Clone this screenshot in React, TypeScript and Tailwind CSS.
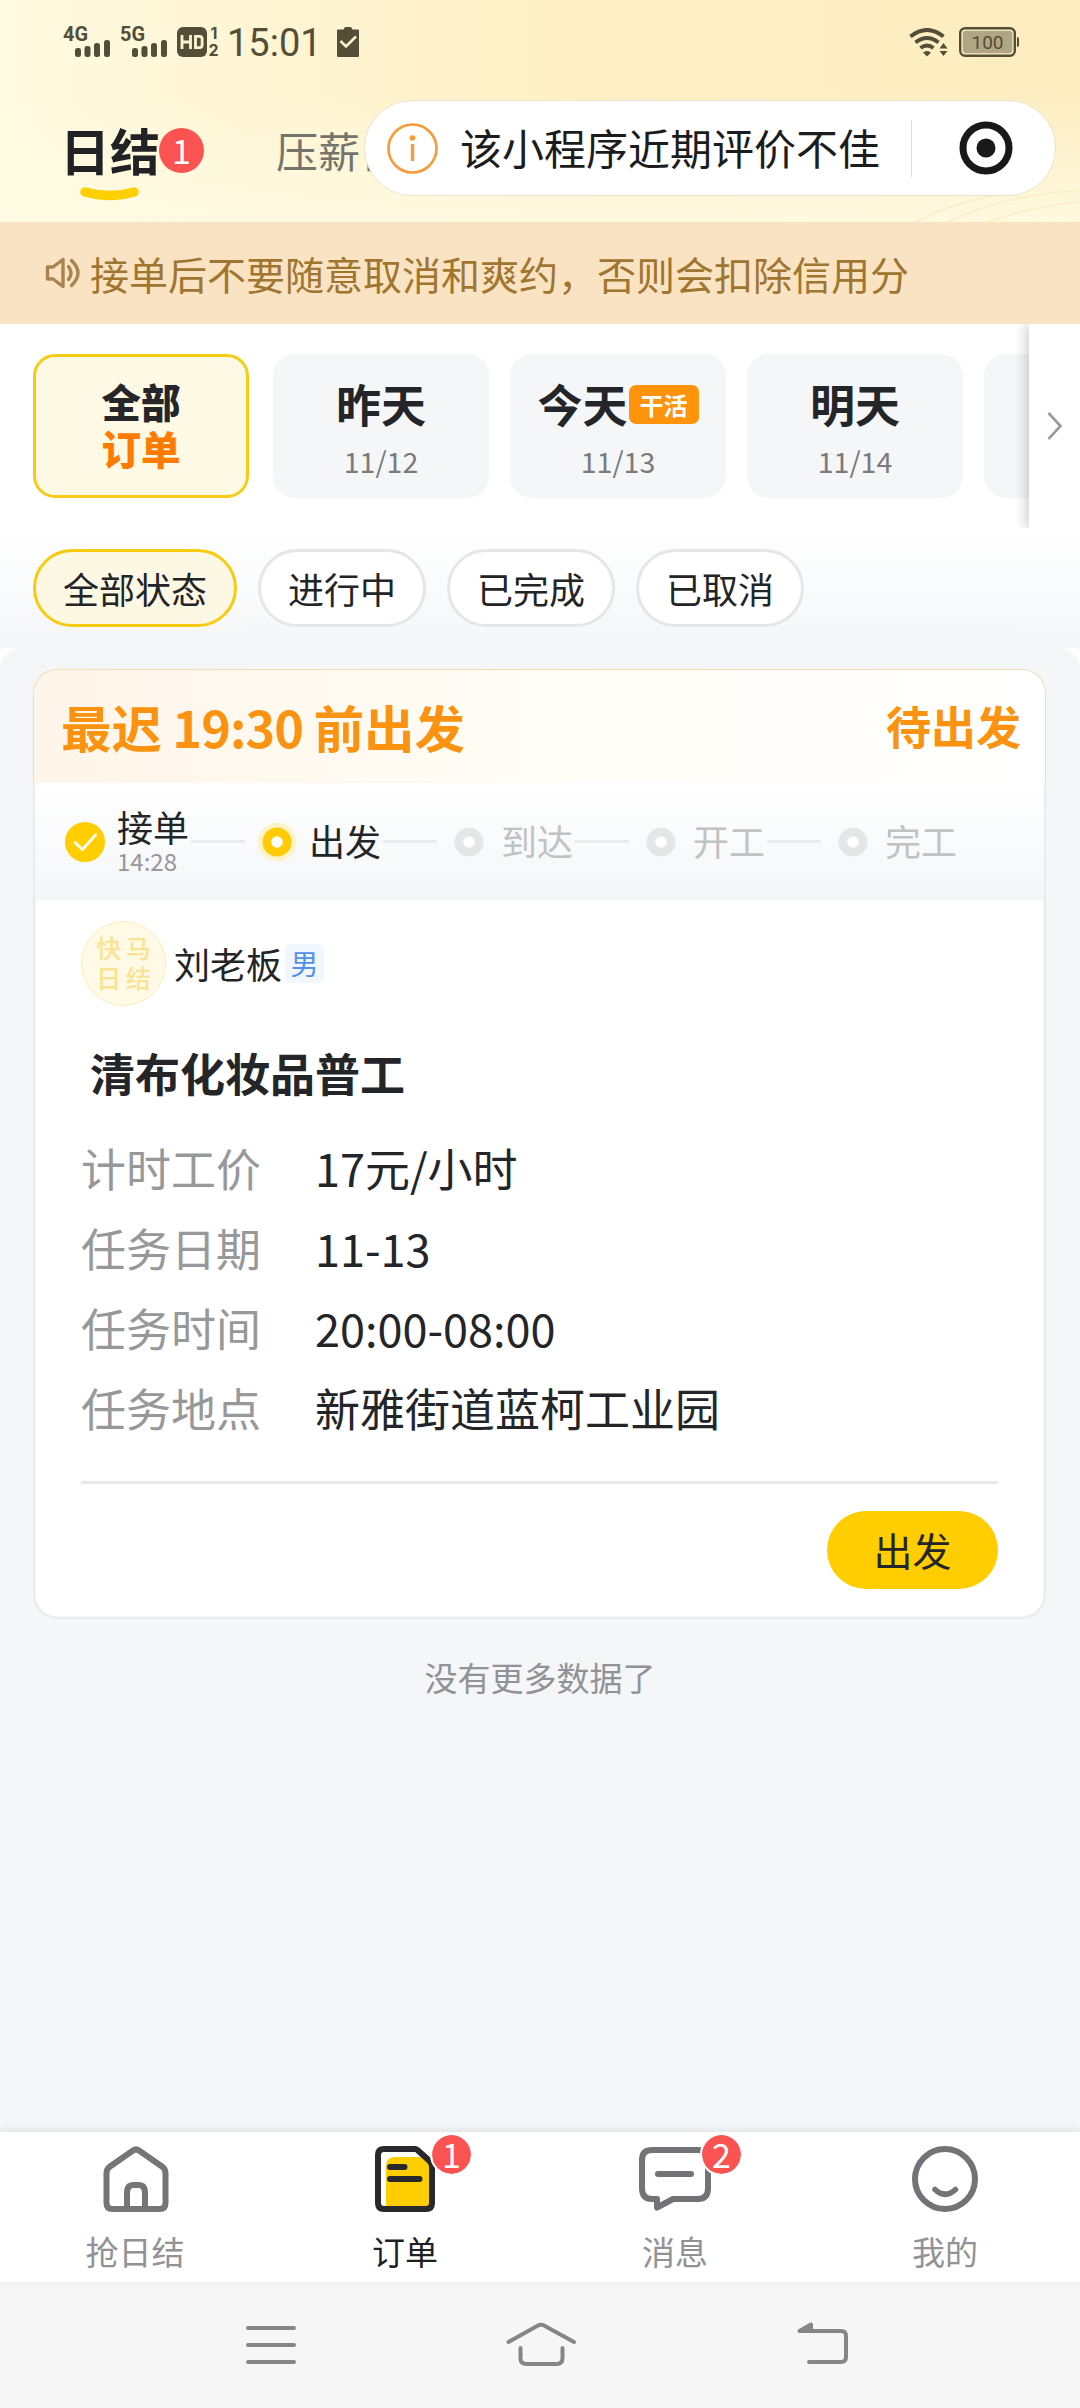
import React from "react";

const days = [
  { name: "昨天", date: "11/12", tag: "" },
  { name: "今天", date: "11/13", tag: "干活" },
  { name: "明天", date: "11/14", tag: "" },
  { name: "", date: "", tag: "" },
];

const filters = ["全部状态", "进行中", "已完成", "已取消"];

const steps = [
  { label: "接单", time: "14:28", state: "done" },
  { label: "出发", time: "", state: "current" },
  { label: "到达", time: "", state: "todo" },
  { label: "开工", time: "", state: "todo" },
  { label: "完工", time: "", state: "todo" },
];

const details = [
  { label: "计时工价", value: "17元/小时" },
  { label: "任务日期", value: "11-13" },
  { label: "任务时间", value: "20:00-08:00" },
  { label: "任务地点", value: "新雅街道蓝柯工业园" },
];

const Signal = ({ label }: { label: string }) => (
  <svg className="overflow-visible" width="48" height="32" viewBox="0 0 48 32" fill="#544d37">
    <text x="0" y="15.500" fontSize="20" fontWeight="700" fontFamily="Roboto, sans-serif" textLength="25" lengthAdjust="spacingAndGlyphs">
      {label}
    </text>
    <rect x="12" y="23" width="6" height="9" rx="2.500" />
    <rect x="21.500" y="21" width="6" height="11" rx="2.500" />
    <rect x="31" y="18" width="6" height="14" rx="2.500" />
    <rect x="41" y="15" width="6" height="17" rx="2.500" />
  </svg>
);

const StatusBar = () => (
  <div className="flex h-[84px] items-start justify-between pt-[25px] pr-[61px] pl-[63px]">
    <div className="flex items-start">
      <Signal label="4G" />
      <div className="ml-[9px]">
        <Signal label="5G" />
      </div>
      <svg className="mt-0.5 ml-[9px] overflow-visible" width="44" height="30" viewBox="0 0 44 30">
        <rect width="30" height="30" rx="6" fill="#544d37" />
        <g fill="none" stroke="#fef5d0" strokeWidth="2.800">
          <path d="M5 8v14M13.500 8v14M5 15h8.500M18.500 9.400h4q2.600 0 2.600 2.600v6q0 2.600-2.600 2.600h-4z" />
        </g>
        <text x="33.500" y="12" fontSize="16" fontWeight="700" fontFamily="Inter, sans-serif" fill="#544d37">
          1
        </text>
        <text x="31.500" y="29" fontSize="16" fontWeight="700" fontFamily="Inter, sans-serif" fill="#544d37">
          2
        </text>
      </svg>
      <span className="ml-[6px] w-[96px] font-['Roboto',sans-serif] text-[38px] leading-[36px] text-[#544d37]">15:01</span>
      <svg className="mt-0.5 ml-[14px]" width="22" height="30" viewBox="0 0 22 30">
        <path d="M1 2.500h5.500L8 0h6l1.500 2.500H21q1 0 1 1V29q0 1-1 1H1q-1 0-1-1V3.500q0-1 1-1z" fill="#544d37" />
        <path d="M3.500 14l5.500 5.500 10-10" fill="none" stroke="#fef3cb" strokeWidth="2.600" />
      </svg>
    </div>
    <div className="flex items-start">
      <svg className="mt-[3px]" width="40" height="29" viewBox="0 0 40 29">
        <g fill="none" stroke="#544d37" strokeWidth="4">
          <path d="M1.500 8.500q16.500-13 33 0" />
          <path d="M6.500 14.500q11.500-9 23 0" />
          <path d="M11.500 20q6.500-5 13 0" />
        </g>
        <path d="M14 24.500q4-3 8 0l-4 4z" fill="#544d37" />
        <path d="M34.500 15l4 5.500h-8zM34.500 28l4-5h-8z" fill="#544d37" />
      </svg>
      <svg className="mt-0.5 ml-2.5" width="60" height="30" viewBox="0 0 60 30">
        <rect x="1.200" y="1.200" width="54.600" height="27.600" rx="5" fill="#fdf0c8" stroke="#544d37" strokeWidth="2.400" />
        <rect x="3.800" y="3.800" width="49.500" height="22.400" rx="3" fill="#b0a684" />
        <path d="M58 10q2 0 2 2v6q0 2-2 2z" fill="#544d37" />
        <text x="28.500" y="22" textAnchor="middle" fontSize="19" fontFamily="Roboto, sans-serif" fill="#544d37">
          100
        </text>
      </svg>
    </div>
  </div>
);

const Capsule = () => (
  <div className="absolute top-[100px] left-[364px] flex h-[96px] w-[692px] items-center rounded-full border border-[#ebe4cf] bg-white pr-[42px] pl-[22px]">
    <svg width="51" height="51" viewBox="0 0 51 51">
      <circle cx="25.500" cy="25.500" r="24" fill="none" stroke="#f79a3a" strokeWidth="2.600" />
      <circle cx="25.500" cy="15" r="2.800" fill="#f79a3a" />
      <path d="M25.500 21v17" stroke="#f79a3a" strokeWidth="3.400" />
    </svg>
    <span className="mb-[3px] ml-[22px] text-[42px] leading-[48px] text-[#1c1c1c]">该小程序近期评价不佳</span>
    <div className="ml-[31px] h-[57px] w-px bg-[#dedede]"></div>
    <svg className="ml-auto" width="54" height="54" viewBox="0 0 54 54">
      <circle cx="27" cy="27" r="23" fill="none" stroke="#191919" strokeWidth="7" />
      <circle cx="27" cy="27" r="9.500" fill="#191919" />
    </svg>
  </div>
);

const Header = () => (
  <div className="relative h-[222px] overflow-hidden bg-linear-to-r from-[#fffae0] via-[#fef0c6] to-[#fdedc0]">
    <div className="absolute inset-x-0 bottom-0 h-[130px] bg-linear-to-b from-[#fffbe8]/0 to-[#fffae3]/90"></div>
    <svg className="absolute right-0 bottom-0" width="170" height="32" viewBox="0 0 170 32" fill="none" stroke="#fbedc4" strokeWidth="1.500">
      <path d="M6 32Q60 2 170-6" />
      <path d="M38 32Q90 6 170 0" />
      <path d="M78 32Q120 16 170 12" />
    </svg>
    <div className="relative">
      <StatusBar />
      <div className="flex items-start pl-[60px]">
        <div className="w-[100px] pt-[36px]">
          <div className="text-[50px] leading-[58px] font-bold whitespace-nowrap text-[#212226]">日结</div>
          <svg className="mt-[8px] ml-[20px]" width="60" height="17" viewBox="0 0 60 17">
            <path d="M5 6q25 7 49 0" fill="none" stroke="#ffd000" strokeWidth="9.500" strokeLinecap="round" />
          </svg>
        </div>
        <div className="mt-[44px] -ml-px flex h-[45px] w-[45px] items-center justify-center rounded-full bg-[#fa5351] text-[34px] leading-[34px] text-white">
          <span className="-mt-0.5">1</span>
        </div>
        <div className="mt-[41px] ml-[72px] text-[42px] leading-[50px] whitespace-nowrap text-[#75746c]">压薪日结</div>
      </div>
    </div>
    <Capsule />
  </div>
);

const Notice = () => (
  <div className="flex h-[102px] items-center bg-[#fae3c2] pl-[45px] text-[#a0752f]">
    <svg width="36" height="32" viewBox="0 0 36 32" fill="none" stroke="#a98450" strokeWidth="3.400" strokeLinejoin="round" strokeLinecap="round">
      <path d="M2.500 10H8l10-7.500v27L8 22H2.500z" />
      <path d="M23.500 9.500q5 6.500 0 13" />
      <path d="M26.500 3.500q13 12.500 0 25" />
    </svg>
    <span className="mb-px ml-[9px] text-[39px] leading-[48px]">接单后不要随意取消和爽约，否则会扣除信用分</span>
  </div>
);

const DayTabs = () => (
  <div className="relative flex h-[204px] items-start overflow-hidden bg-white pt-[30px] pl-[33px]">
    <div className="mr-6 flex h-[144px] w-[216px] shrink-0 flex-col items-center rounded-[22px] border-[3px] border-[#f6cc17] bg-[#fef9e4] pt-5 text-[39.500px] leading-[47px] font-black">
      <span className="text-[#26262a]">全部</span>
      <span className="text-[#ff7a00]">订单</span>
    </div>
    {days.map((day, index) => (
      <div key={index} className="mr-[21px] h-[144px] w-[216px] shrink-0 rounded-[22px] bg-[#f4f6f8] pt-5">
        <div className="flex h-[60px] items-center justify-center">
          <span className="text-[45px] leading-[60px] font-bold text-[#242529]">{day.name}</span>
          {day.tag && (
            <span className="ml-px rounded-[7px] bg-[#ff930c] px-[11px] text-[24px] leading-[39px] font-bold text-white">
              {day.tag}
            </span>
          )}
        </div>
        <div className="mt-[9px] text-center text-[28.500px] leading-[36px] text-[#7a7a7c]">{day.date}</div>
      </div>
    ))}
    <div className="absolute top-0 right-0 flex h-[204px] w-[51px] items-center bg-white pl-[18px] shadow-[-3px_0_12px_rgba(0,0,0,0.2)]">
      <svg width="16" height="30" viewBox="0 0 16 30" fill="none" stroke="#9a9a9a" strokeWidth="2.600">
        <path d="M1.500 2l12 13-12 13" />
      </svg>
    </div>
  </div>
);

const Filters = () => (
  <div className="flex h-[120px] items-start gap-[21px] bg-linear-to-b from-white to-[#f4f6f8] pt-[21px] pl-[33px]">
    {filters.map((name, index) => (
      <div
        key={name}
        className={`flex h-[78px] items-center rounded-full border-[3px] px-[27px] text-[36px] leading-[44px] text-[#232426] ${
          index === 0 ? "border-[#f8ca10] bg-[#fdf8e3]" : "border-[#e6e6e7] bg-white"
        }`}
      >
        {name}
      </div>
    ))}
  </div>
);

const StepDot = ({ state }: { state: string }) => {
  if (state === "done") {
    return (
      <svg width="40" height="40" viewBox="0 0 40 40">
        <circle cx="20" cy="20" r="20" fill="#ffcd00" />
        <path d="M10 20.500l7.500 7L30.500 13" fill="none" stroke="#fff" strokeWidth="2.800" strokeLinecap="round" strokeLinejoin="round" />
      </svg>
    );
  }
  const current = state === "current";
  return (
    <svg width="40" height="40" viewBox="0 0 40 40">
      {current && <circle cx="20" cy="20" r="19.500" fill="#fdf3c8" />}
      <circle cx="20" cy="20" r="14.500" fill={current ? "#ffcb05" : "#e5e6e6"} />
      <circle cx="20" cy="20" r="5.800" fill="#fff" />
    </svg>
  );
};

const Steps = () => (
  <div className="flex h-[117px] items-center bg-linear-to-b from-white to-[#f4f6f8] pl-[30px]">
    {steps.map((step, index) => (
      <div key={step.label} className="flex w-[192px] shrink-0 items-center">
        <StepDot state={step.state} />
        <div className={`ml-[12px] w-[74px] ${step.state === "todo" ? "text-[#c1c2c4]" : "text-[#232426]"}`}>
          <div className={step.time ? "text-[36px] leading-[39px]" : "pb-[3px] text-[36px] leading-[44px]"}>{step.label}</div>
          {step.time && <div className="text-[24px] leading-[30px] text-[#97989a]">{step.time}</div>}
        </div>
        {index < steps.length - 1 && <div className="h-[3px] w-[54px] bg-[#ebecec]"></div>}
      </div>
    ))}
  </div>
);

const OrderCard = () => (
  <div className="mr-[34px] ml-[33px] flex h-[950px] flex-col overflow-hidden rounded-[24px] bg-white shadow-[inset_0_0_0_2.500px_#ebebec]">
    <div className="flex h-[114px] shrink-0 items-center justify-between rounded-t-[24px] border border-b-0 border-[#f4dcb4] bg-linear-to-r from-[#fff5ea] via-[#fffdf6] to-white pr-[24px] pl-[27px] font-bold text-[#fb9311]">
      <span className="text-[50.400px] leading-[60px]">
        最迟<span className="tracking-[-0.9px]"> 19:30 </span>前出发
      </span>
      <span className="pb-px text-[45px] leading-[60px]">待出发</span>
    </div>
    <div className="mx-0.5">
      <Steps />
    </div>
    <div className="flex flex-col px-12">
      <div className="mt-[21px] flex items-center">
        <div className="grid h-[85px] w-[85px] grid-cols-2 content-center justify-center rounded-full border border-[#fbedb9] bg-[#fffae6] px-[12px] pb-[3px] text-center text-[25px] leading-[30px] font-medium text-[#fae392]">
          <span>快</span>
          <span>马</span>
          <span>日</span>
          <span>结</span>
        </div>
        <span className="mb-0.5 ml-[8px] text-[36px] leading-[44px] text-[#232426]">刘老板</span>
        <span className="ml-[3px] w-[39px] rounded-[6px] bg-[#f1f7fe] text-center text-[28px] leading-[39px] text-[#5290ea]">男</span>
      </div>
      <div className="mt-[35px] ml-[9px] text-[45px] leading-[64px] font-bold text-[#242529]">清布化妆品普工</div>
      <div className="mt-[23px] flex flex-col">
        {details.map((row) => (
          <div key={row.label} className="flex h-20 items-center text-[45px] leading-[64px]">
            <span className="w-[234px] text-[#97989a]">{row.label}</span>
            <span className="text-[#242529]">{row.value}</span>
          </div>
        ))}
      </div>
      <div className="mt-[33px] h-[3px] bg-[#e8e8e9]"></div>
      <button className="mt-[27px] ml-auto h-[78px] w-[171px] rounded-full bg-[#ffcd00] pb-[3px] text-[39px] leading-[48px] text-[#242529]">
        出发
      </button>
    </div>
  </div>
);

const HomeIcon = () => (
  <svg className="ml-0.5" width="66" height="66" viewBox="0 0 66 66" fill="none" stroke="#757575" strokeWidth="6" strokeLinejoin="round">
    <path d="M3.500 27q0-4 3.500-6.500L30 4.500q3-2.200 6 0L59 20.500q3.500 2.500 3.500 6.500v30q0 6-6 6h-47q-6 0-6-6z" />
    <path d="M24 63V47q0-8 6.500-8h5q6.500 0 6.500 8v16" />
  </svg>
);

const OrderIcon = () => (
  <svg width="60" height="66" viewBox="0 0 60 66">
    <path d="M11 20q0-9 9-9h29l8 8v44H11z" fill="#ffcd00" />
    <path d="M9 3h31q1.500 0 2.500 1L54 14.500q3 3 3 7V57q0 6-6 6H9q-6 0-6-6V9q0-6 6-6z" fill="none" stroke="#28282d" strokeWidth="6" />
    <path d="M15 21h14.500M15 33h29.500" stroke="#28282d" strokeWidth="6" strokeLinecap="round" />
  </svg>
);

const MessageIcon = () => (
  <svg width="72" height="66" viewBox="0 0 72 66" fill="none" stroke="#737377" strokeWidth="6" strokeLinecap="round">
    <path d="M13 4h46q10 0 10 10v28q0 11-10 11H34L18 61.500V53h-5Q3 53 3 42V14Q3 4 13 4z" strokeLinejoin="round" />
    <path d="M19 28h33" />
  </svg>
);

const MineIcon = () => (
  <svg width="66" height="66" viewBox="0 0 66 66" fill="none" stroke="#737377" strokeWidth="6" strokeLinecap="round">
    <circle cx="33" cy="33" r="30" />
    <path d="M23 43.500q10 9.500 20.500 0" strokeWidth="5.500" />
  </svg>
);

const tabs = [
  { label: "抢日结", icon: <HomeIcon />, badge: "" },
  { label: "订单", icon: <OrderIcon />, badge: "1" },
  { label: "消息", icon: <MessageIcon />, badge: "2" },
  { label: "我的", icon: <MineIcon />, badge: "" },
];

const TabBar = () => (
  <div className="relative grid h-[150px] shrink-0 grid-cols-4 bg-white shadow-[0_-2px_10px_rgba(0,0,0,0.09)]">
    {tabs.map((tab, index) => (
      <div key={tab.label} className="relative flex flex-col items-center pt-[14px]">
        {tab.icon}
        {tab.badge && (
          <span className="absolute top-[1px] left-[160px] box-content flex h-[39px] w-[39px] items-center justify-center rounded-full border-2 border-white bg-[#fa5351] bg-clip-padding text-[34px] leading-[34px] text-white">
            <span className="-mt-0.5">{tab.badge}</span>
          </span>
        )}
        <span className={`mt-[19px] text-[33px] leading-[40px] ${index === 1 ? "text-[#1f2024]" : "text-[#919196]"}`}>
          {tab.label}
        </span>
      </div>
    ))}
  </div>
);

const SystemNav = () => (
  <div className="flex h-[126px] shrink-0 items-start bg-[#f6f6f6] pt-[40px] pl-[245px]">
    <svg width="52" height="46" viewBox="0 0 52 46" stroke="#868686" strokeWidth="4" strokeLinecap="round">
      <path d="M3 6h46M3 23h46M3 40h46" />
    </svg>
    <svg className="ml-[208px]" width="74" height="46" viewBox="0 0 74 46" fill="none" stroke="#868686" strokeWidth="4" strokeLinecap="round">
      <path d="M3.500 20L33 3.500q3-1.500 6 0L69 20" />
      <path d="M15.500 26v10q0 6 6 6h30q6 0 6-6V26" />
    </svg>
    <svg className="ml-[217px]" width="56" height="46" viewBox="0 0 56 46" fill="none" stroke="#868686" strokeWidth="4" strokeLinecap="round" strokeLinejoin="round">
      <path d="M14 9h31q5 0 5 5v21q0 5-5 5H13" />
      <path d="M3.500 9L15 2.500V9z" fill="#868686" />
    </svg>
  </div>
);

const App = () => {
  return (
    <div className="flex h-[2408px] w-[1080px] flex-col overflow-hidden bg-white font-['Noto_Sans_CJK_SC',sans-serif]">
      <Header />
      <Notice />
      <DayTabs />
      <Filters />
      <div className="flex-1 rounded-t-[22px] bg-[#f4f6f8] pt-[21px]">
        <OrderCard />
        <div className="mt-[36px] text-center text-[33px] leading-[44px] text-[#919297]">没有更多数据了</div>
      </div>
      <TabBar />
      <SystemNav />
    </div>
  );
};

export default App;
